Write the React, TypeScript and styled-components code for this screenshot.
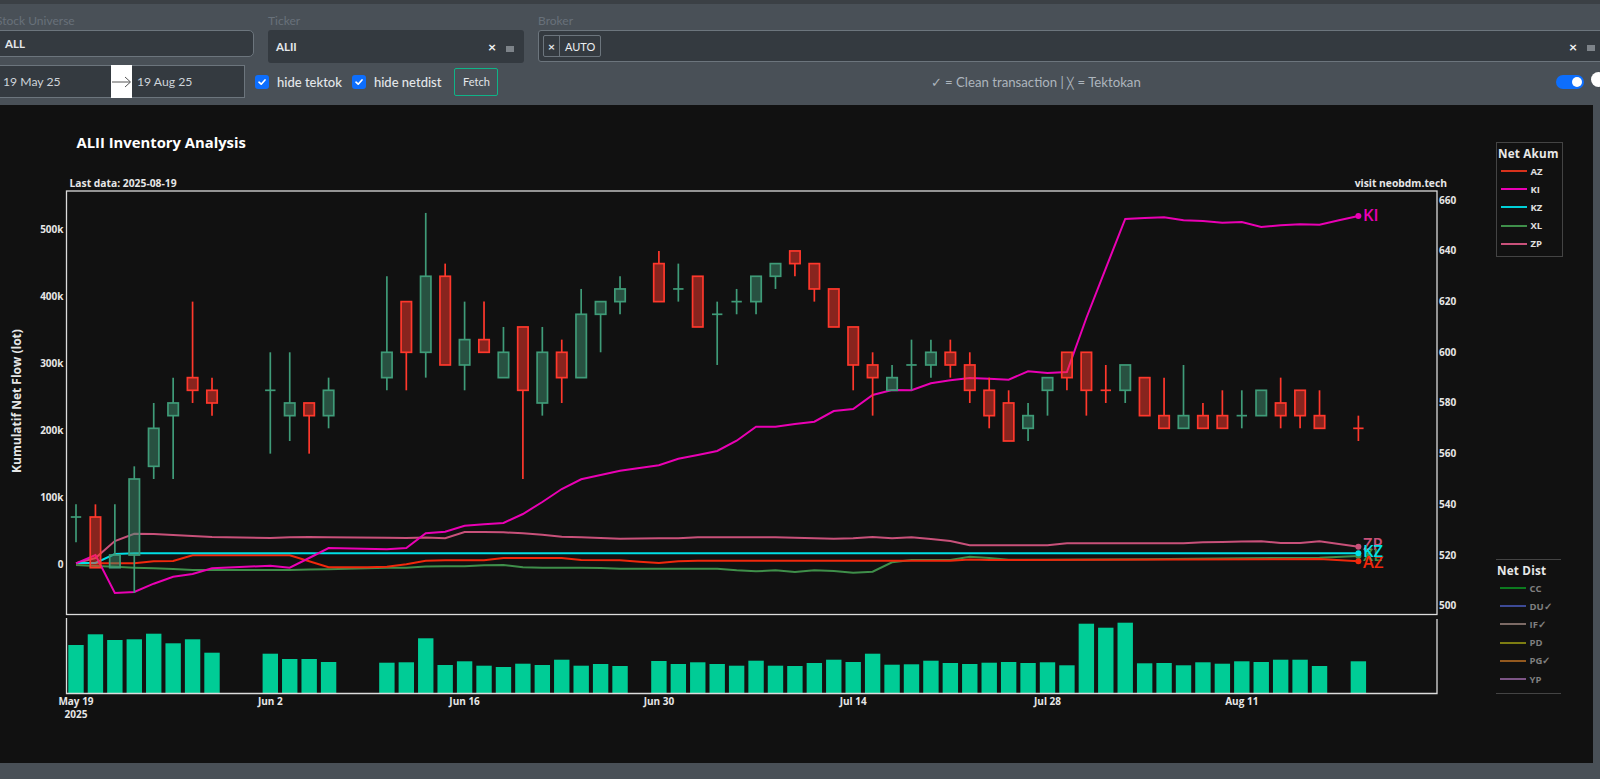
import React from 'react';
import styled, { createGlobalStyle } from 'styled-components';

const UI_FONT = 'Lato, "Noto Sans", sans-serif';
const CHART_FONT = '"Open Sans", "Noto Sans", sans-serif';

const GlobalStyle = createGlobalStyle`
  html, body {
    margin: 0;
    padding: 0;
    height: 100%;
    overflow: hidden;
    background: #495057;
  }
  #root {
    height: 100%;
  }
`;

const Page = styled.div`
  width: 1600px;
  height: 779px;
  overflow: hidden;
  background: #495057;
  font-family: ${UI_FONT};
  color: #dee2e6;
`;

const TopStrip = styled.div`
  height: 4px;
  background: #3b4045;
`;

const Toolbar = styled.div`
  height: 101px;
  box-sizing: border-box;
  padding-top: 8px;
  margin-left: -10px;
  width: 1616px;
`;

const FilterRow = styled.div`
  display: flex;
  gap: 14px;
  height: 53px;
`;

const Field = styled.div<{ $width: number }>`
  width: ${({ $width }) => $width}px;
  flex-shrink: 0;
`;

const FieldLabel = styled.div<{ $indent?: number }>`
  height: 18px;
  line-height: 17px;
  padding-left: ${({ $indent }) => $indent ?? 0}px;
  font-size: 12px;
  color: #68717a;
`;

const UniverseInput = styled.div`
  height: 27px;
  box-sizing: border-box;
  border: 1px solid #6c757d;
  border-radius: 5px;
  background: #343a40;
  display: flex;
  align-items: center;
  padding-left: 14px;
  font-size: 11.5px;
  font-weight: 700;
  color: #e4e7ea;
`;

const TickerInput = styled.div`
  height: 33px;
  box-sizing: border-box;
  border-radius: 3px;
  background: #343a40;
  display: flex;
  align-items: center;
  padding: 0 10px 0 8px;
  font-size: 11.5px;
  font-weight: 700;
  color: #e4e7ea;
`;

const BrokerInput = styled(TickerInput)`
  height: 32px;
  border: 1px solid #6c757d;
  padding: 0 10px 0 4px;
  border-radius: 3px 0 0 3px;
`;

const Chip = styled.div`
  display: flex;
  align-items: stretch;
  height: 22px;
  box-sizing: border-box;
  border: 1px solid #6c757d;
  border-radius: 2px;
`;

const ChipRemove = styled.span`
  width: 15px;
  display: flex;
  align-items: center;
  justify-content: center;
  border-right: 1px solid #6c757d;
  font-size: 12px;
  font-weight: 700;
`;

const ChipLabel = styled.span`
  padding: 0 5px;
  display: flex;
  align-items: center;
  font-size: 11px;
  font-weight: 400;
  color: #eceef0;
`;

const Spacer = styled.div`
  flex: 1;
`;

const ClearMark = styled.span`
  font-size: 14px;
  font-weight: 700;
  color: #f1f3f5;
`;

const Handle = styled.span`
  width: 8px;
  height: 6px;
  margin: 4px 0 0 10px;
  background: #7d8389;
`;

const ControlRow = styled.div`
  display: flex;
  align-items: center;
  height: 33px;
`;

const DatePicker = styled.div`
  width: 255px;
  height: 33px;
  flex-shrink: 0;
  box-sizing: border-box;
  display: flex;
  border: 1px solid #6c757d;
  background: #343a40;
  font-size: 12.2px;
  color: #ced4da;
`;

const DateValue = styled.div<{ $width?: number; $pad: number }>`
  ${({ $width }) => ($width ? `width: ${$width}px;` : 'flex: 1;')}
  box-sizing: border-box;
  padding-left: ${({ $pad }) => $pad}px;
  display: flex;
  align-items: center;
`;

const ArrowBox = styled.div`
  width: 21px;
  margin: -1px 0;
  background: #ffffff;
  display: flex;
  align-items: center;
  justify-content: center;
`;

const CheckGroup = styled.label<{ $gapLeft: number }>`
  display: flex;
  align-items: center;
  gap: 8px;
  margin-left: ${({ $gapLeft }) => $gapLeft}px;
  font-size: 13px;
  font-weight: 500;
  color: #e4e7ea;
`;

const CheckBox = styled.span`
  width: 14px;
  height: 14px;
  border-radius: 3px;
  background: #0d6efd;
  display: flex;
  align-items: center;
  justify-content: center;
`;

const FetchButton = styled.button`
  margin-left: 13px;
  width: 44px;
  height: 28px;
  padding: 0;
  background: transparent;
  border: 1px solid #0fb488;
  border-radius: 2px;
  color: #e4e7ea;
  font-family: ${UI_FONT};
  font-size: 11px;
`;

const Hint = styled.div`
  flex: 1;
  text-align: center;
  padding-left: 17px;
  font-size: 13.2px;
  color: #adb5bd;
`;

const HintCross = styled.span`
  font-size: 10.5px;
`;

const Toggle = styled.div`
  width: 28px;
  height: 14px;
  flex-shrink: 0;
  border-radius: 7px;
  background: #0d6efd;
  display: flex;
  align-items: center;
  justify-content: flex-end;
  padding-right: 2px;
  box-sizing: border-box;
`;

const ToggleKnob = styled.span`
  width: 10px;
  height: 10px;
  border-radius: 50%;
  background: #ffffff;
`;

const ThemeKnob = styled.span`
  width: 15px;
  height: 15px;
  flex-shrink: 0;
  margin: -4px 0 0 7px;
  border-radius: 50%;
  background: #ffffff;
`;

const ChartPanel = styled.div`
  width: 1593px;
  height: 658px;
  background: #111111;
  display: flex;
`;

const ChartSvg = styled.svg`
  width: 1490px;
  height: 658px;
  flex-shrink: 0;
  display: block;
`;

const LegendColumn = styled.div`
  flex: 1;
  padding: 37px 0 0 5.5px;
  font-family: ${CHART_FONT};
`;

const LegendBox = styled.div<{ $boxed?: boolean }>`
  width: 67px;
  box-sizing: border-box;
  border-top: 1px solid #444444;
  border-bottom: 1px solid #444444;
  ${({ $boxed }) =>
    $boxed
      ? 'border-right: 1px solid #444444; height: 115px; border-left: 1px solid #444444;'
      : 'margin-top: 302px; height: 135px; width: 65px;'}
  padding: 2px 0 0 1.5px;
`;

const LegendTitle = styled.div`
  height: 17px;
  line-height: 17px;
  font-size: 11.7px;
  font-weight: 700;
  color: #e8e8e8;
  letter-spacing: 0.2px;
`;

const LegendItem = styled.div<{ $dim?: boolean }>`
  display: flex;
  align-items: center;
  height: 18.2px;
  font-size: 9.5px;
  font-weight: 700;
  color: ${({ $dim }) => ($dim ? '#7f7f7f' : '#e0e0e0')};
`;

const LegendLine = styled.span<{ $color: string }>`
  width: 26px;
  height: 2px;
  margin: 0 4px 0 2.5px;
  background: ${({ $color }) => $color};
`;

const AxisText = styled.text<{ $size?: number }>`
  font-family: ${CHART_FONT};
  font-size: ${({ $size }) => $size ?? 10}px;
  font-weight: 700;
  fill: #e6e6e6;
`;

const TitleText = styled.text`
  font-family: ${CHART_FONT};
  font-size: 14.8px;
  font-weight: 700;
  fill: #ffffff;
`;

const EndLabel = styled.text<{ $color: string }>`
  font-family: ${CHART_FONT};
  font-size: 16.5px;
  font-weight: 600;
  fill: ${({ $color }) => $color};
`;

type Candle = [number, number, number, number, number, 'g' | 'r'];

// idx, high, body top, body bottom, low
const CANDLES: Candle[] = [
  [0, 540, 535, 535, 525, 'g'], [1, 540, 535, 515, 515, 'r'], [2, 540, 520, 515, 515, 'g'],
  [3, 555, 550, 520, 505, 'g'], [4, 580, 570, 555, 550, 'g'], [5, 590, 580, 575, 550, 'g'],
  [6, 620, 590, 585, 580, 'r'], [7, 590, 585, 580, 575, 'r'], [10, 600, 585, 585, 560, 'g'],
  [11, 600, 580, 575, 565, 'g'], [12, 580, 580, 575, 560, 'r'], [13, 590, 585, 575, 570, 'g'],
  [16, 630, 600, 590, 585, 'g'], [17, 620, 620, 600, 585, 'r'], [18, 655, 630, 600, 590, 'g'],
  [19, 635, 630, 595, 595, 'r'], [20, 620, 605, 595, 585, 'g'], [21, 620, 605, 600, 600, 'r'],
  [22, 610, 600, 590, 590, 'g'], [23, 610, 610, 585, 550, 'r'], [24, 610, 600, 580, 575, 'g'],
  [25, 605, 600, 590, 580, 'r'], [26, 625, 615, 590, 590, 'g'], [27, 620, 620, 615, 600, 'g'],
  [28, 630, 625, 620, 615, 'g'], [30, 640, 635, 620, 620, 'r'], [31, 635, 625, 625, 620, 'g'],
  [32, 630, 630, 610, 610, 'r'], [33, 620, 615, 615, 595, 'g'], [34, 625, 620, 620, 615, 'g'],
  [35, 630, 630, 620, 615, 'g'], [36, 635, 635, 630, 625, 'g'], [37, 640, 640, 635, 630, 'r'],
  [38, 635, 635, 625, 620, 'r'], [39, 625, 625, 610, 610, 'r'], [40, 610, 610, 595, 585, 'r'],
  [41, 600, 595, 590, 575, 'r'], [42, 595, 590, 585, 585, 'g'], [43, 605, 595, 595, 585, 'g'],
  [44, 605, 600, 595, 590, 'g'], [45, 605, 600, 595, 590, 'r'], [46, 600, 595, 585, 580, 'r'],
  [47, 590, 585, 575, 570, 'r'], [48, 585, 580, 565, 565, 'r'], [49, 580, 575, 570, 565, 'g'],
  [50, 590, 590, 585, 575, 'g'], [51, 600, 600, 590, 585, 'r'], [52, 600, 600, 585, 575, 'r'],
  [53, 595, 585, 585, 580, 'r'], [54, 595, 595, 585, 580, 'g'], [55, 590, 590, 575, 575, 'r'],
  [56, 590, 575, 570, 570, 'r'], [57, 595, 575, 570, 570, 'g'], [58, 580, 575, 570, 570, 'r'],
  [59, 585, 575, 570, 570, 'r'], [60, 585, 575, 575, 570, 'g'], [61, 585, 585, 575, 575, 'g'],
  [62, 590, 580, 575, 570, 'r'], [63, 585, 585, 575, 570, 'r'], [64, 585, 575, 570, 570, 'r'],
  [66, 575, 570, 570, 565, 'r'],
];

const VOLUME: [number, number][] = [
  [0, 645], [1, 634.3], [2, 640], [3, 639.3], [4, 633.7], [5, 643.3], [6, 639.3], [7, 652.7],
  [10, 653.7], [11, 659], [12, 659], [13, 662], [16, 662.7], [17, 662.3], [18, 638.3], [19, 665],
  [20, 661.3], [21, 665.7], [22, 667], [23, 663.7], [24, 665], [25, 659.7], [26, 665.7], [27, 664],
  [28, 666], [30, 661], [31, 664], [32, 662.3], [33, 664], [34, 665.7], [35, 660.7], [36, 665.7],
  [37, 666], [38, 663], [39, 659.7], [40, 662], [41, 653.7], [42, 664.7], [43, 664.3], [44, 660.7],
  [45, 663], [46, 664], [47, 662.7], [48, 662], [49, 663], [50, 662.3], [51, 665.3], [52, 623.7],
  [53, 627.7], [54, 622.7], [55, 663.3], [56, 663], [57, 665.3], [58, 662.3], [59, 663.7], [60, 661.3],
  [61, 662], [62, 659.7], [63, 659.7], [64, 666], [66, 661.3],
];

type Series = { name: string; color: string; labelY: number; points: [number, number][] };

const SERIES: Series[] = [
  {
    name: 'ZP', color: '#c9517a', labelY: 544,
    points: [[0, 563.3], [1, 558], [2, 541], [3, 533.7], [4, 534], [5, 535], [6, 536], [7, 537], [10, 538], [11, 537.3], [12, 537], [13, 537.3], [16, 537.7], [17, 538], [18, 537.5], [19, 538.3], [20, 532], [21, 532], [22, 532.3], [23, 533.3], [24, 534.7], [25, 536.7], [26, 537.3], [27, 538], [28, 538.7], [30, 538.3], [31, 538.3], [32, 537.3], [33, 537.3], [34, 537.3], [35, 537.3], [36, 537.3], [37, 537.8], [38, 538.2], [39, 538.7], [40, 538.3], [41, 537], [42, 538.3], [43, 537.3], [44, 539], [45, 541], [46, 545.3], [47, 545.3], [48, 545.3], [49, 545.3], [50, 545.3], [51, 543.3], [52, 543.3], [53, 543.3], [54, 543.3], [55, 543.3], [56, 543.3], [57, 543.3], [58, 542.3], [59, 542], [60, 541.5], [61, 541.3], [62, 543], [63, 543], [64, 541.3], [66, 546.7]],
  },
  {
    name: 'XL', color: '#3f8f4a', labelY: 555,
    points: [[0, 565], [1, 566], [2, 566.7], [3, 567.7], [4, 568.3], [5, 569], [6, 570], [7, 570], [10, 570], [11, 570], [12, 569.6], [13, 569.3], [16, 567.7], [17, 567.7], [18, 566.5], [19, 566.3], [20, 566.3], [21, 565.3], [22, 565], [23, 567.3], [24, 567.7], [25, 567.7], [26, 567.7], [27, 568], [28, 568.7], [30, 568.7], [31, 568.7], [32, 568.7], [33, 568.7], [34, 570.3], [35, 571.3], [36, 570.3], [37, 572], [38, 570.3], [39, 571], [40, 572.7], [41, 571.7], [42, 562.3], [43, 560], [44, 560], [45, 560], [46, 556.7], [47, 558], [48, 559.7], [50, 559.7], [55, 559.3], [60, 558.3], [64, 557.7], [66, 556]],
  },
  {
    name: 'AZ', color: '#f0280c', labelY: 562,
    points: [[0, 563.3], [3, 563.3], [4, 561.3], [5, 561], [6, 555.3], [11, 555.3], [13, 567.3], [15, 567.3], [16, 566.7], [17, 564.3], [18, 560.7], [19, 560.3], [21, 560.3], [22, 558], [25, 558], [26, 560], [28, 560.3], [29, 561.7], [30, 563], [31, 561.3], [32, 560.7], [45, 560.7], [46, 559.5], [47, 560], [64, 559], [66, 561.3]],
  },
  {
    name: 'KZ', color: '#00e0e6', labelY: 551,
    points: [[0, 563], [1, 563], [2, 554], [3, 553.3], [66, 553.3]],
  },
  {
    name: 'KI', color: '#ea00b4', labelY: 214.5,
    points: [[0, 563.3], [1, 555], [2, 593], [3, 592], [4, 583.7], [5, 576.7], [6, 574], [7, 568.3], [10, 565.7], [11, 567.7], [12, 558], [13, 548], [16, 549.3], [17, 548], [18, 533.3], [19, 531.7], [20, 525.7], [21, 524.3], [22, 523], [23, 514], [24, 502], [25, 489], [26, 479.3], [27, 475], [28, 470.7], [30, 465.3], [31, 458.7], [32, 455], [33, 451], [34, 440.7], [35, 426.7], [36, 426.7], [37, 424], [38, 421.7], [39, 411], [40, 409], [41, 395], [42, 390], [43, 390.3], [44, 383.3], [45, 380.3], [46, 378], [47, 378.7], [48, 379.7], [49, 371.3], [50, 373], [51, 372], [52, 318], [53, 268.3], [54, 219], [55, 218], [56, 217.3], [57, 220.3], [58, 221], [59, 222.7], [60, 222], [61, 227], [62, 225.3], [63, 224.3], [64, 224.7], [65, 220.3], [66, 216]],
  },
];

const LEFT_TICKS = [['500k', 230], ['400k', 297], ['300k', 364], ['200k', 431], ['100k', 498], ['0', 564.5]] as const;
const RIGHT_TICKS = [660, 640, 620, 600, 580, 560, 540, 520, 500];
const DATE_TICKS = [['May 19', 0], ['Jun 2', 10], ['Jun 16', 20], ['Jun 30', 30], ['Jul 14', 40], ['Jul 28', 50], ['Aug 11', 60]] as const;

const NET_AKUM = [['AZ', '#d8321c'], ['KI', '#ea00b4'], ['KZ', '#00d0d8'], ['XL', '#3f8f4a'], ['ZP', '#c9517a']];
const NET_DIST = [['CC', '#0c7a1f'], ['DU✓', '#3d4a96'], ['IF✓', '#7c6a65'], ['PD', '#7d7d12'], ['PG✓', '#93591f'], ['YP', '#7d5586']];

const xAt = (i: number) => 76 + i * 19.43;
const yAt = (price: number) => 605.7 - (price - 500) * 2.534;

const CandleMark: React.FC<{ candle: Candle }> = ({ candle }) => {
  const [i, high, top, bottom, low, dir] = candle;
  const x = xAt(i);
  const stroke = dir === 'g' ? '#3f9b78' : '#ff382c';
  const fill = dir === 'g' ? 'rgba(63,145,113,0.5)' : 'rgba(255,56,44,0.5)';
  return (
    <g>
      <line x1={x} x2={x} y1={yAt(high)} y2={yAt(top)} stroke={stroke} strokeWidth={1.7} />
      <line x1={x} x2={x} y1={yAt(bottom)} y2={yAt(low)} stroke={stroke} strokeWidth={1.7} />
      {top === bottom ? (
        <line x1={x - 5.2} x2={x + 5.2} y1={yAt(top)} y2={yAt(top)} stroke={stroke} strokeWidth={1.7} />
      ) : (
        <rect x={x - 5.2} width={10.4} y={yAt(top)} height={yAt(bottom) - yAt(top)} fill={fill} stroke={stroke} strokeWidth={1.7} />
      )}
    </g>
  );
};

const Chart: React.FC = () => (
  <ChartSvg viewBox="0 105 1490 658">
    <TitleText x={76.5} y={148}>ALII Inventory Analysis</TitleText>
    <AxisText x={69.5} y={186.5} $size={10.3}>Last data: 2025-08-19</AxisText>
    <AxisText x={1447} y={187} textAnchor="end" $size={10.3}>visit neobdm.tech</AxisText>
    <AxisText x={0} y={0} $size={12} textAnchor="middle" transform="translate(21 401) rotate(-90)">
      Kumulatif Net Flow (lot)
    </AxisText>

    {LEFT_TICKS.map(([label, y]) => (
      <AxisText key={label} x={63.5} y={y + 3} textAnchor="end">{label}</AxisText>
    ))}
    {RIGHT_TICKS.map((price) => (
      <AxisText key={price} x={1439} y={yAt(price) + 3.5}>{price}</AxisText>
    ))}
    {DATE_TICKS.map(([label, i]) => (
      <AxisText key={label} x={xAt(i)} y={705} textAnchor="middle">{label}</AxisText>
    ))}
    <AxisText x={76} y={718} textAnchor="middle">2025</AxisText>

    {SERIES.map((s) => (
      <polyline
        key={s.name}
        points={s.points.map(([i, y]) => `${xAt(i)},${y}`).join(' ')}
        fill="none"
        stroke={s.color}
        strokeWidth={2}
      />
    ))}
    {CANDLES.map((c) => (
      <CandleMark key={c[0]} candle={c} />
    ))}
    {SERIES.map((s) => (
      <g key={s.name}>
        <circle cx={xAt(66)} cy={s.points[s.points.length - 1][1]} r={3} fill={s.color} />
        <EndLabel x={1363} y={s.labelY + 6} $color={s.color}>{s.name}</EndLabel>
      </g>
    ))}

    <rect x={66.5} y={191} width={1370.5} height={423.5} fill="none" stroke="#dcdcdc" strokeWidth={1.3} />
    {VOLUME.map(([i, top]) => (
      <rect key={i} x={xAt(i) - 7.7} width={15.4} y={top} height={693.3 - top} fill="#00cc96" />
    ))}
    <polyline points="66.5,618 66.5,693.5 1437,693.5 1437,619" fill="none" stroke="#dcdcdc" strokeWidth={1.3} />
  </ChartSvg>
);

const Legend: React.FC<{ title: string; items: string[][]; boxed?: boolean }> = ({ title, items, boxed }) => (
  <LegendBox $boxed={boxed}>
    <LegendTitle>{title}</LegendTitle>
    {items.map(([name, color]) => (
      <LegendItem key={name} $dim={!boxed}>
        <LegendLine $color={color} />
        {name}
      </LegendItem>
    ))}
  </LegendBox>
);

const Tick: React.FC = () => (
  <svg width="10" height="10" viewBox="0 0 10 10">
    <path d="M2 5.2 L4.2 7.2 L8 3" fill="none" stroke="#fff" strokeWidth="1.7" strokeLinecap="round" strokeLinejoin="round" />
  </svg>
);

const App: React.FC = () => (
  <Page>
    <GlobalStyle />
    <TopStrip />
    <Toolbar>
      <FilterRow>
        <Field $width={264}>
          <FieldLabel $indent={6}>Stock Universe</FieldLabel>
          <UniverseInput>ALL</UniverseInput>
        </Field>
        <Field $width={256}>
          <FieldLabel>Ticker</FieldLabel>
          <TickerInput>
            ALII
            <Spacer />
            <ClearMark>×</ClearMark>
            <Handle />
          </TickerInput>
        </Field>
        <Field $width={1068}>
          <FieldLabel>Broker</FieldLabel>
          <BrokerInput>
            <Chip>
              <ChipRemove>×</ChipRemove>
              <ChipLabel>AUTO</ChipLabel>
            </Chip>
            <Spacer />
            <ClearMark>×</ClearMark>
            <Handle />
          </BrokerInput>
        </Field>
      </FilterRow>
      <ControlRow>
        <DatePicker>
          <DateValue $width={120} $pad={12}>19 May 25</DateValue>
          <ArrowBox>
            <svg width="21" height="12" viewBox="0 0 21 12">
              <path d="M1 6 H19 M14 1 L19.5 6 L14 11" fill="none" stroke="#555" strokeWidth="1" />
            </svg>
          </ArrowBox>
          <DateValue $pad={5}>19 Aug 25</DateValue>
        </DatePicker>
        <CheckGroup $gapLeft={10}>
          <CheckBox><Tick /></CheckBox>
          hide tektok
        </CheckGroup>
        <CheckGroup $gapLeft={10}>
          <CheckBox><Tick /></CheckBox>
          hide netdist
        </CheckGroup>
        <FetchButton>Fetch</FetchButton>
        <Hint>✓ = Clean transaction | <HintCross>╳</HintCross> = Tektokan</Hint>
        <Toggle><ToggleKnob /></Toggle>
        <ThemeKnob />
      </ControlRow>
    </Toolbar>
    <ChartPanel>
      <Chart />
      <LegendColumn>
        <Legend title="Net Akum" items={NET_AKUM} boxed />
        <Legend title="Net Dist" items={NET_DIST} />
      </LegendColumn>
    </ChartPanel>
  </Page>
);

export default App;
